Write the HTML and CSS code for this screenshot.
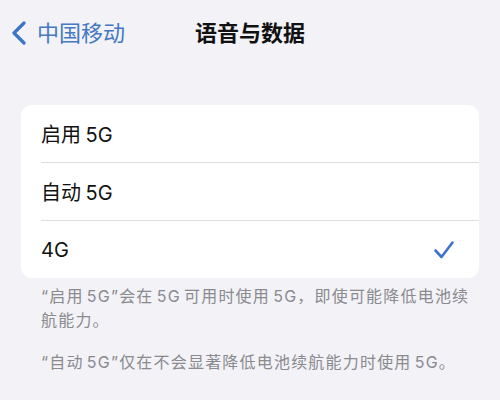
FILE: index.html
```html
<!DOCTYPE html>
<html lang="zh-CN">
<head>
<meta charset="utf-8">
<link rel="stylesheet" href="styles.css">
</head>
<body>
<header class="nav">
  <a class="back">
    <svg class="chev" width="16" height="24" viewBox="0 0 16 24"><polyline points="13,2 3,12 13,22" fill="none" stroke="#3c74cc" stroke-width="3.2" stroke-linecap="round" stroke-linejoin="round"/></svg>
    <span class="back-label">中国移动</span>
  </a>
  <h1 class="title">语音与数据</h1>
  <div class="spacer"></div>
</header>
<main>
  <ul class="card">
    <li class="row"><span>启用 5G</span></li>
    <li class="row"><span>自动 5G</span></li>
    <li class="row"><span>4G</span>
      <svg class="check" width="22" height="20" viewBox="0 0 22 20"><polyline points="2.5,10.5 8.5,17 19.5,2.5" fill="none" stroke="#3c74cc" stroke-width="2.6" stroke-linecap="round" stroke-linejoin="round"/></svg>
    </li>
  </ul>
  <div class="footer">
    <p>“启用 5G”会在 5G 可用时使用 5G，即使可能降低电池续航能力。</p>
    <p>“自动 5G”仅在不会显著降低电池续航能力时使用 5G。</p>
  </div>
</main>
</body>
</html>
```
FILE: styles.css
```css
html, body {
  margin: 0;
  padding: 0;
  background: #f2f2f7;
  font-family: "Inter", "Noto Sans CJK SC", sans-serif;
}
body {
  width: 500px;
  height: 400px;
  overflow: hidden;
}
.nav {
  display: grid;
  grid-template-columns: 1fr auto 1fr;
  align-items: center;
  height: 66px;
}
.back {
  display: flex;
  align-items: center;
  gap: 10px;
  padding-left: 11px;
  color: #4579c0;
  font-size: 22px;
  line-height: 1;
}
.chev {
  display: block;
}
.title {
  margin: 0;
  font-size: 22px;
  font-weight: 700;
  color: #111;
  line-height: 1;
}
.card {
  list-style: none;
  margin: 39px 21px 0;
  padding: 0 0 0 20px;
  background: #fff;
  border-radius: 11px;
  overflow: hidden;
}
.row {
  display: flex;
  align-items: center;
  justify-content: space-between;
  height: 57px;
  padding-right: 24px;
  font-size: 20px;
  word-spacing: -1px;
  color: #111;
  border-bottom: 1px solid #dedee2;
}
.row:last-child {
  border-bottom: none;
}
.check {
  display: block;
}
.footer {
  margin-top: 6px;
  padding: 0 22px 0 41px;
  color: #8a8a8f;
  font-size: 16px;
  letter-spacing: 1.2px;
  word-spacing: -2.5px;
  line-height: 24px;
}
.footer p {
  margin: 0 0 18px;
}
```
